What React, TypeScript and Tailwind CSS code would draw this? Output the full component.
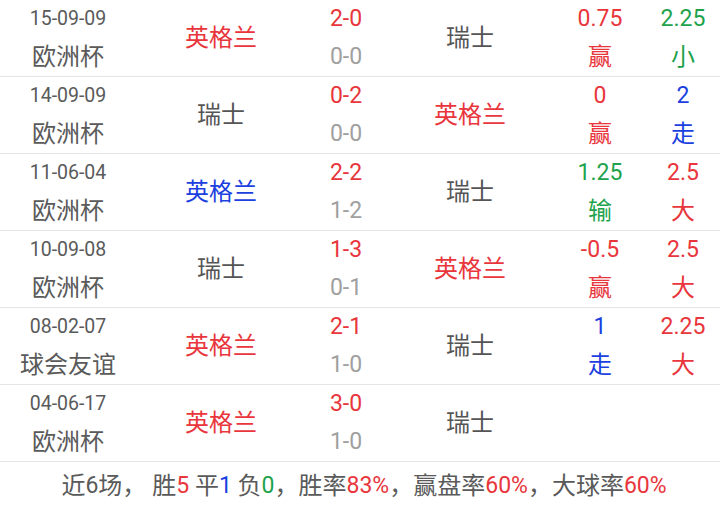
import React from 'react';

type Match = {
  date: string;
  league: string;
  home: string;
  homeColor: string;
  score: string;
  half: string;
  away: string;
  awayColor: string;
  hcp?: string;
  hcpRes?: string;
  hcpColor?: string;
  ou?: string;
  ouRes?: string;
  ouColor?: string;
};

const red = 'text-[#e8363c]';
const gray = 'text-[#555555]';
const blue = 'text-[#1c3fe0]';
const green = 'text-[#1ea34c]';

const matches: Match[] = [
  { date: '15-09-09', league: '欧洲杯', home: '英格兰', homeColor: red, score: '2-0', half: '0-0', away: '瑞士', awayColor: gray, hcp: '0.75', hcpRes: '赢', hcpColor: red, ou: '2.25', ouRes: '小', ouColor: green },
  { date: '14-09-09', league: '欧洲杯', home: '瑞士', homeColor: gray, score: '0-2', half: '0-0', away: '英格兰', awayColor: red, hcp: '0', hcpRes: '赢', hcpColor: red, ou: '2', ouRes: '走', ouColor: blue },
  { date: '11-06-04', league: '欧洲杯', home: '英格兰', homeColor: blue, score: '2-2', half: '1-2', away: '瑞士', awayColor: gray, hcp: '1.25', hcpRes: '输', hcpColor: green, ou: '2.5', ouRes: '大', ouColor: red },
  { date: '10-09-08', league: '欧洲杯', home: '瑞士', homeColor: gray, score: '1-3', half: '0-1', away: '英格兰', awayColor: red, hcp: '-0.5', hcpRes: '赢', hcpColor: red, ou: '2.5', ouRes: '大', ouColor: red },
  { date: '08-02-07', league: '球会友谊', home: '英格兰', homeColor: red, score: '2-1', half: '1-0', away: '瑞士', awayColor: gray, hcp: '1', hcpRes: '走', hcpColor: blue, ou: '2.25', ouRes: '大', ouColor: red },
  { date: '04-06-17', league: '欧洲杯', home: '英格兰', homeColor: red, score: '3-0', half: '1-0', away: '瑞士', awayColor: gray },
];

// Latin digits and CJK glyphs are sized separately to match the device rendering
const num = 'text-[23px]';
const zh = 'text-[24px]';

export default function App() {
  return (
    <div className="w-[720px] h-[509px] bg-white overflow-hidden font-['Roboto','Noto_Sans_CJK_SC',sans-serif]">
      {matches.map((m) => (
        <div
          key={m.date}
          className="grid grid-cols-[136px_170px_80px_168px_92px_74px] h-[77px] border-b border-[#e6e6e6] items-center text-center"
        >
          <div className="flex flex-col leading-[38px] text-[#5a5a5a]">
            <span className="text-[19.5px]">{m.date}</span>
            <span className={zh}>{m.league}</span>
          </div>
          <div className={`${zh} ${m.homeColor}`}>{m.home}</div>
          <div className={`flex flex-col leading-[38px] ${num}`}>
            <span className={red}>{m.score}</span>
            <span className="text-[#a0a0a0]">{m.half}</span>
          </div>
          <div className={`${zh} ${m.awayColor}`}>{m.away}</div>
          <div className={`flex flex-col leading-[38px] ${m.hcpColor ?? ''}`}>
            <span className={num}>{m.hcp}</span>
            <span className={zh}>{m.hcpRes}</span>
          </div>
          <div className={`flex flex-col leading-[38px] ${m.ouColor ?? ''}`}>
            <span className={num}>{m.ou}</span>
            <span className={zh}>{m.ouRes}</span>
          </div>
        </div>
      ))}
      <div className="h-[47px] pl-[8px] flex items-center justify-center text-[#5a5a5a] whitespace-pre leading-none">
        <span className={zh}>近</span>
        <span className={num}>6</span>
        <span className={zh}>场， 胜</span>
        <span className={`${num} ${red}`}>5 </span>
        <span className={zh}>平</span>
        <span className={`${num} ${blue}`}>1 </span>
        <span className={zh}>负</span>
        <span className={`${num} ${green}`}>0</span>
        <span className={zh}>，胜率</span>
        <span className={`${num} ${red}`}>83%</span>
        <span className={zh}>，赢盘率</span>
        <span className={`${num} ${red}`}>60%</span>
        <span className={zh}>，大球率</span>
        <span className={`${num} ${red}`}>60%</span>
      </div>
    </div>
  );
}
